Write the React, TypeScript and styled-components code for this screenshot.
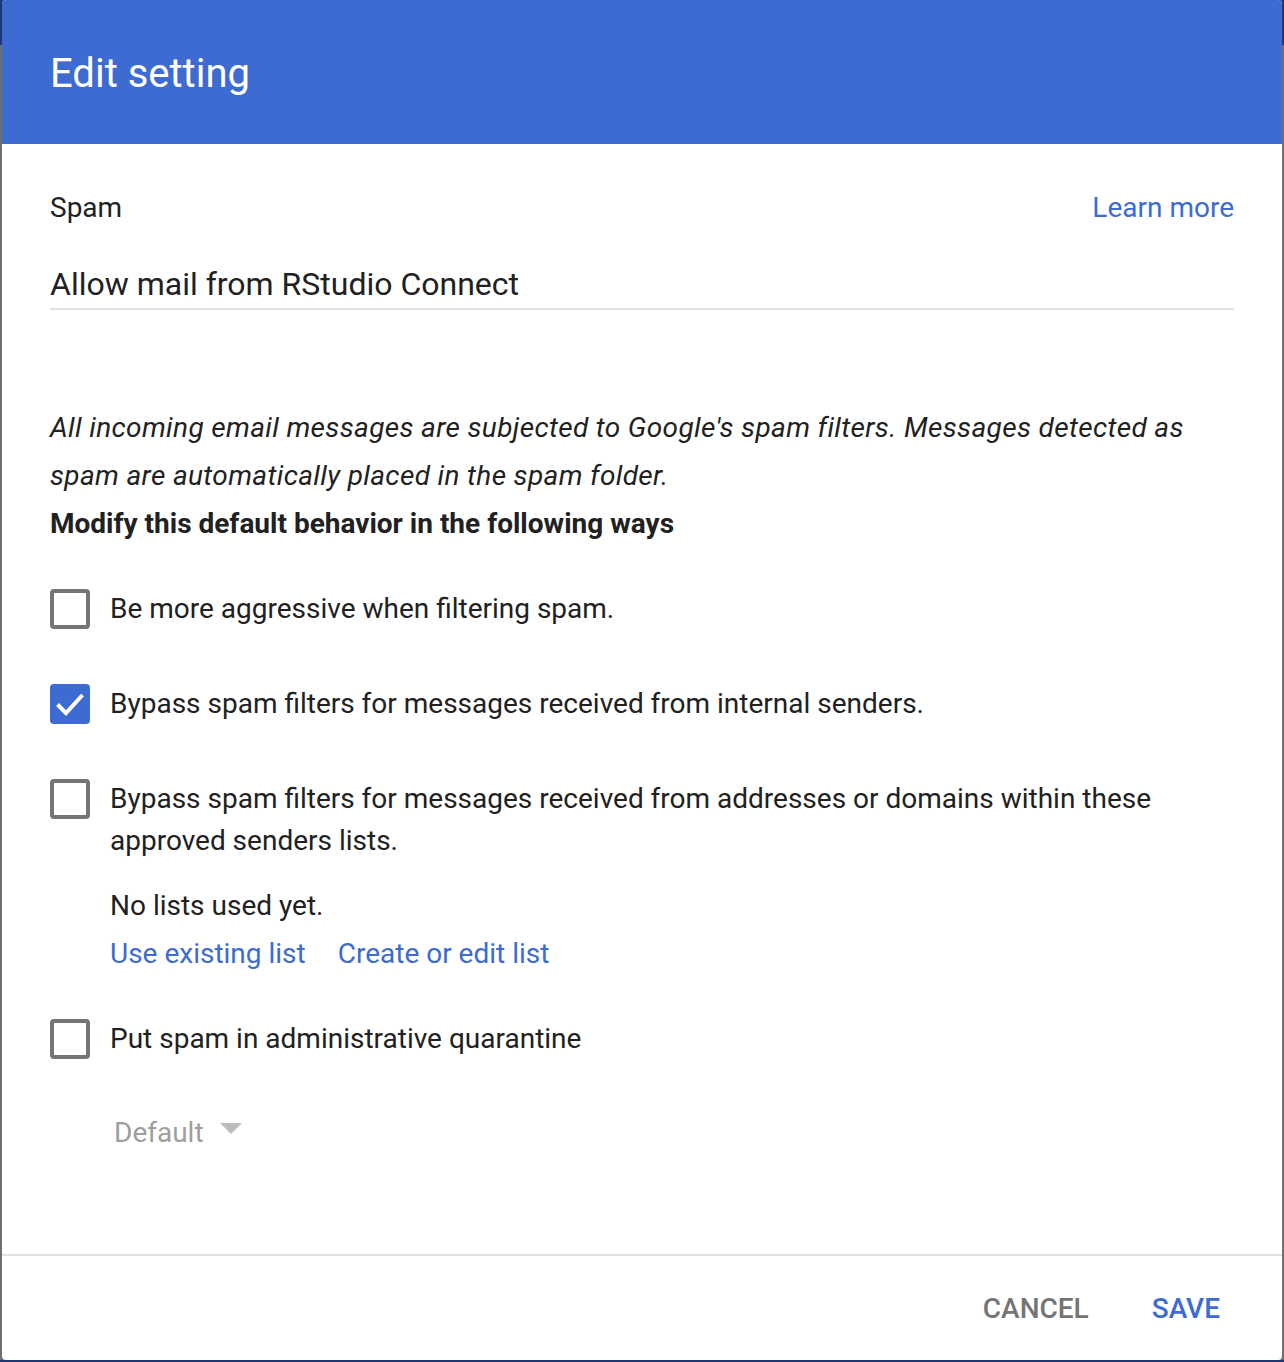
import React, { useState } from "react";
import styled, { createGlobalStyle } from "styled-components";

const GlobalStyle = createGlobalStyle`
  html, body {
    margin: 0;
    padding: 0;
  }
  body {
    background: linear-gradient(#1f3775 0, #1f3775 45px, #6f6f6f 45px);
    font-family: Roboto, "Noto Sans", "Liberation Sans", sans-serif;
    color: #212121;
  }
`;

const BLUE = "#3d6bd1";

const Dialog = styled.div`
  width: 1280px;
  height: 1360px;
  margin: 0 2px;
  background: #fff;
  border-radius: 4px;
  overflow: hidden;
  display: flex;
  flex-direction: column;
`;

const Header = styled.header`
  height: 144px;
  flex-shrink: 0;
  background: ${BLUE};
  display: flex;
  align-items: center;
  padding: 2px 48px 0;
  box-sizing: border-box;
`;

const Title = styled.h1`
  margin: 0;
  font-size: 40px;
  font-weight: 400;
  color: #fff;
`;

const Body = styled.main`
  flex: 1;
  padding: 44px 48px 0;
`;

const LabelRow = styled.div`
  display: flex;
  justify-content: space-between;
  align-items: center;
  font-size: 28px;
  line-height: 40px;
`;

const Link = styled.a`
  color: ${BLUE};
  text-decoration: none;
  cursor: pointer;
  font-size: 28px;
`;

const NameField = styled.div`
  margin-top: 36px;
  font-size: 32px;
  line-height: 40px;
  padding-bottom: 4px;
  border-bottom: 2px solid #e0e0e0;
`;

const Description = styled.p`
  margin: 94px 0 0;
  font-size: 28px;
  line-height: 48px;
  font-style: italic;
  letter-spacing: 0.35px;
`;

const Lead = styled.div`
  font-size: 28px;
  line-height: 48px;
  font-weight: 700;
`;

const Options = styled.div`
  margin-top: 40px;
  display: flex;
  flex-direction: column;
  gap: 53px;
`;

const Option = styled.div`
  display: flex;
  align-items: flex-start;
  gap: 20px;
`;

const Box = styled.button<{ $checked: boolean }>`
  flex-shrink: 0;
  width: 40px;
  height: 40px;
  margin-top: 1px;
  padding: 0;
  box-sizing: border-box;
  border-radius: 4px;
  border: ${(p) => (p.$checked ? "none" : "4px solid #757575")};
  background: ${(p) => (p.$checked ? BLUE : "#fff")};
  cursor: pointer;
  display: flex;
  align-items: center;
  justify-content: center;
`;

const OptionText = styled.div`
  font-size: 28px;
  line-height: 42px;
`;

const Extra = styled.div`
  margin-top: 20px;
  margin-bottom: -13px;
  font-size: 28px;
  line-height: 48px;
`;

const LinkRow = styled.div`
  display: flex;
  gap: 32px;
`;

const Select = styled.div`
  margin: 49px 0 0 64px;
  display: flex;
  align-items: center;
  gap: 16px;
  font-size: 28px;
  line-height: 48px;
  color: #9e9e9e;
`;

const Caret = styled.span`
  width: 0;
  height: 0;
  border-left: 11px solid transparent;
  border-right: 11px solid transparent;
  border-top: 11px solid #bdbdbd;
  margin-top: -10px;
`;

const Footer = styled.footer`
  height: 104px;
  flex-shrink: 0;
  border-top: 2px solid #e0e0e0;
  display: flex;
  justify-content: flex-end;
  align-items: center;
  gap: 31px;
  padding-right: 46px;
`;

const FooterButton = styled.button<{ $primary?: boolean }>`
  background: none;
  border: none;
  padding: 8px 16px;
  font-family: inherit;
  font-size: 28px;
  font-weight: 500;
  text-transform: uppercase;
  color: ${(p) => (p.$primary ? BLUE : "#757575")};
  cursor: pointer;
`;

function Check() {
  return (
    <svg width="40" height="40" viewBox="0 0 40 40">
      <path
        d="M7.5 20.5 L16 29 L32.5 11"
        fill="none"
        stroke="#fff"
        strokeWidth="4"
      />
    </svg>
  );
}

export default function App() {
  const [opts, setOpts] = useState([false, true, false, false]);
  const toggle = (i: number) =>
    setOpts((o) => o.map((v, j) => (j === i ? !v : v)));

  return (
    <>
      <GlobalStyle />
      <Dialog>
        <Header>
          <Title>Edit setting</Title>
        </Header>
        <Body>
          <LabelRow>
            <span>Spam</span>
            <Link>Learn more</Link>
          </LabelRow>
          <NameField>Allow mail from RStudio Connect</NameField>

          <Description>
            All incoming email messages are subjected to Google's spam filters.
            Messages detected as spam are automatically placed in the spam
            folder.
          </Description>
          <Lead>Modify this default behavior in the following ways</Lead>

          <Options>
            <Option>
              <Box $checked={opts[0]} onClick={() => toggle(0)}>
                {opts[0] && <Check />}
              </Box>
              <OptionText>Be more aggressive when filtering spam.</OptionText>
            </Option>
            <Option>
              <Box $checked={opts[1]} onClick={() => toggle(1)}>
                {opts[1] && <Check />}
              </Box>
              <OptionText>
                Bypass spam filters for messages received from internal senders.
              </OptionText>
            </Option>
            <Option>
              <Box $checked={opts[2]} onClick={() => toggle(2)}>
                {opts[2] && <Check />}
              </Box>
              <div>
                <OptionText>
                  Bypass spam filters for messages received from addresses or
                  domains within these approved senders lists.
                </OptionText>
                <Extra>
                  <div>No lists used yet.</div>
                  <LinkRow>
                    <Link>Use existing list</Link>
                    <Link>Create or edit list</Link>
                  </LinkRow>
                </Extra>
              </div>
            </Option>
            <Option>
              <Box $checked={opts[3]} onClick={() => toggle(3)}>
                {opts[3] && <Check />}
              </Box>
              <OptionText>Put spam in administrative quarantine</OptionText>
            </Option>
          </Options>

          <Select>
            <span>Default</span>
            <Caret />
          </Select>
        </Body>
        <Footer>
          <FooterButton>Cancel</FooterButton>
          <FooterButton $primary>Save</FooterButton>
        </Footer>
      </Dialog>
    </>
  );
}
